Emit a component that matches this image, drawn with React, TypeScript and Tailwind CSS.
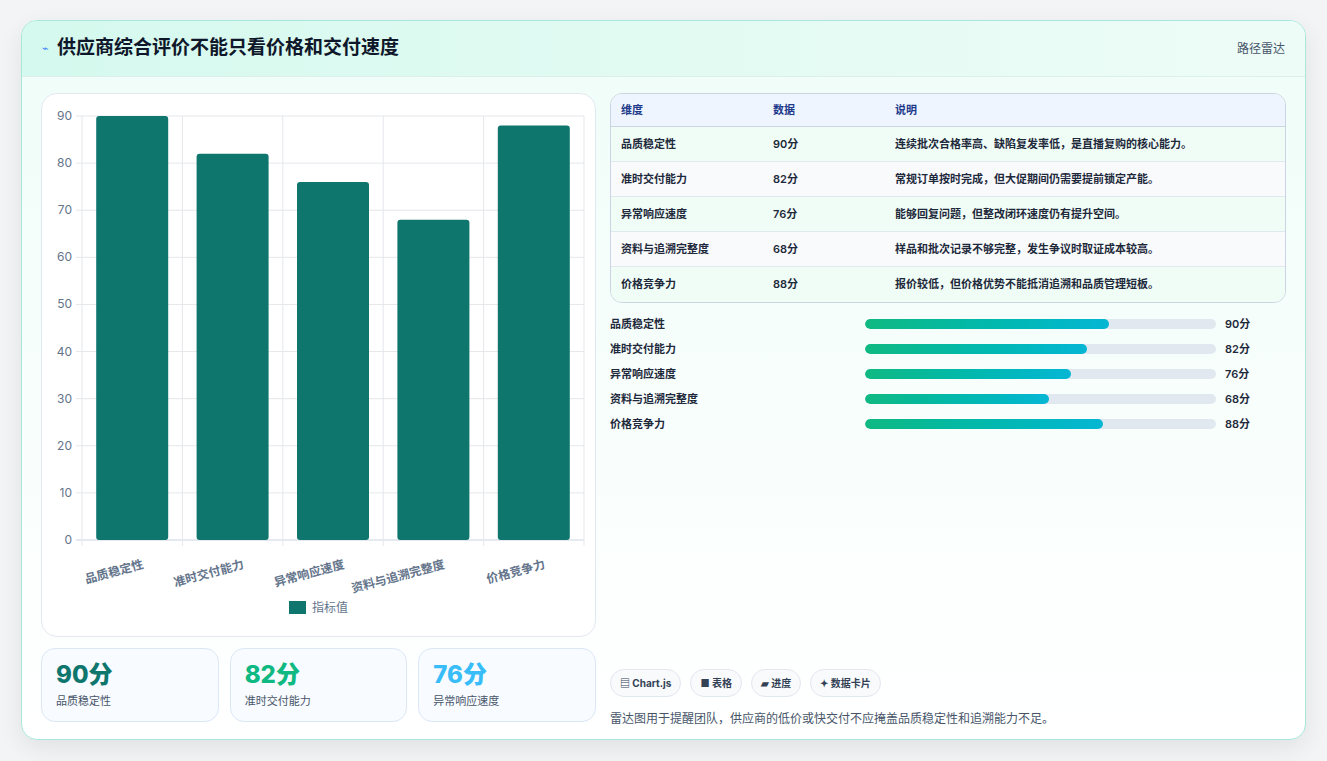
import React from "react";

const data = [
  { n: "品质稳定性", v: 90, d: "连续批次合格率高、缺陷复发率低，是直播复购的核心能力。" },
  { n: "准时交付能力", v: 82, d: "常规订单按时完成，但大促期间仍需要提前锁定产能。" },
  { n: "异常响应速度", v: 76, d: "能够回复问题，但整改闭环速度仍有提升空间。" },
  { n: "资料与追溯完整度", v: 68, d: "样品和批次记录不够完整，发生争议时取证成本较高。" },
  { n: "价格竞争力", v: 88, d: "报价较低，但价格优势不能抵消追溯和品质管理短板。" },
];

function Chart() {
  const x0 = 40, x1 = 542, y0 = 22, y1 = 446;
  const cw = (x1 - x0) / 5;
  const sy = (y1 - y0) / 90;
  return (
    <svg width="555" height="543" className="block">
      {Array.from({ length: 10 }).map((_, i) => {
        const y = y1 - i * 10 * sy;
        return (
          <g key={i}>
            <line x1={x0 - 6} x2={x1} y1={y} y2={y} stroke={i === 0 ? "#cbd5e1" : "#e5e7eb"} />
            <text x={x0 - 10} y={y + 4} textAnchor="end" fontSize="12" fill="#64748b">{i * 10}</text>
          </g>
        );
      })}
      {Array.from({ length: 6 }).map((_, i) => (
        <line key={i} x1={x0 + i * cw} x2={x0 + i * cw} y1={y0} y2={y1 + 6} stroke="#e5e7eb" />
      ))}
      {data.map((d, i) => {
        const h = d.v * sy;
        const cx = x0 + i * cw + cw / 2;
        return (
          <g key={d.n}>
            <rect x={cx - 36} y={y1 - h} width={72} height={h} rx={3} fill="#0f766e" />
            <text x={cx + 12} y={y1 + 28} textAnchor="end" fontSize="12" fontWeight="600" fill="#64748b" transform={`rotate(-15 ${cx + 12} ${y1 + 28})`}>{d.n}</text>
          </g>
        );
      })}
      <rect x={247} y={507} width={17} height={13} fill="#0f766e" />
      <text x={270} y={518} fontSize="12" fill="#64748b">指标值</text>
    </svg>
  );
}

export default function App() {
  return (
    <div className="w-[1327px] h-[761px] bg-[#f3f4f6] pt-[20px] pl-[21px]" style={{ fontFamily: "Inter, 'Noto Sans CJK SC', sans-serif" }}>
      <div className="w-[1285px] h-[720px] rounded-[16px] border border-[#a7e8da] bg-gradient-to-b from-[#effdf8] to-white overflow-hidden shadow-[0_8px_24px_rgba(0,0,0,0.08)]">
        <div className="h-[56px] flex items-center justify-between px-[20px] bg-gradient-to-r from-[#d5f9ee] to-[#eefcf7] border-b border-[#dcefea]">
          <div className="flex items-center gap-[8px]">
            <span className="text-[#3b82f6] text-[11px]">⌁</span>
            <span className="text-[19px] font-bold text-[#0f172a]">供应商综合评价不能只看价格和交付速度</span>
          </div>
          <span className="text-[12px] text-[#475569]">路径雷达</span>
        </div>
        <div className="flex gap-[14px] px-[19px] pt-[16px]">
          <div className="w-[555px] flex flex-col gap-[11px]">
            <div className="h-[544px] rounded-[16px] border border-[#e2e8f0] bg-white"><Chart /></div>
            <div className="flex gap-[11px]">
              {[["90分", "text-[#0f766e]", "品质稳定性"], ["82分", "text-[#10b981]", "准时交付能力"], ["76分", "text-[#38bdf8]", "异常响应速度"]].map(([v, c, l]) => (
                <div key={l} className="flex-1 h-[74px] rounded-[14px] border border-[#dbe7f5] bg-[#f8fbff] px-[14px] pt-[10px]">
                  <div className={`text-[24px] font-extrabold leading-[32px] ${c}`}>{v}</div>
                  <div className="text-[11px] text-[#475569] mt-[2px]">{l}</div>
                </div>
              ))}
            </div>
          </div>
          <div className="flex-1 flex flex-col">
            <div className="rounded-[12px] border border-[#cbd5e1] overflow-hidden text-[11px] font-semibold text-[#1e293b]">
              <div className="flex h-[33px] items-center bg-[#eef5ff] text-[#1e3a8a] border-b border-[#cbd5e1]">
                <span className="w-[162px] pl-[10px]">维度</span><span className="w-[122px]">数据</span><span>说明</span>
              </div>
              {data.map((d, i) => (
                <div key={d.n} className={`flex h-[35px] items-center ${i % 2 ? "bg-[#f8fafc]" : "bg-[#f0fdf6]"} ${i < 4 ? "border-b border-[#e2e8f0]" : ""}`}>
                  <span className="w-[162px] pl-[10px]">{d.n}</span><span className="w-[122px]">{d.v}分</span><span>{d.d}</span>
                </div>
              ))}
            </div>
            <div className="mt-[12px] flex flex-col gap-[7px]">
              {data.map(d => (
                <div key={d.n} className="flex items-center h-[18px] text-[11px] font-semibold text-[#1e293b]">
                  <span className="w-[255px]">{d.n}</span>
                  <div className="w-[351px] h-[10px] rounded-full bg-[#e2e8f0] overflow-hidden">
                    <div className="h-full rounded-full bg-gradient-to-r from-[#10b981] to-[#06b6d4]" style={{ width: `${d.v * 2.71}px` }} />
                  </div>
                  <span className="ml-[9px]">{d.v}分</span>
                </div>
              ))}
            </div>
            <div className="mt-[236px] flex gap-[9px]">
              {["▤ Chart.js", "■ 表格", "▰ 进度", "✦ 数据卡片"].map(t => (
                <span key={t} className="h-[28px] px-[9px] flex items-center rounded-full border border-[#e2e8f0] bg-[#f8fafc] text-[10px] font-bold text-[#334155]">{t}</span>
              ))}
            </div>
            <div className="mt-[13px] text-[12px] text-[#475569]">雷达图用于提醒团队，供应商的低价或快交付不应掩盖品质稳定性和追溯能力不足。</div>
          </div>
        </div>
      </div>
    </div>
  );
}
